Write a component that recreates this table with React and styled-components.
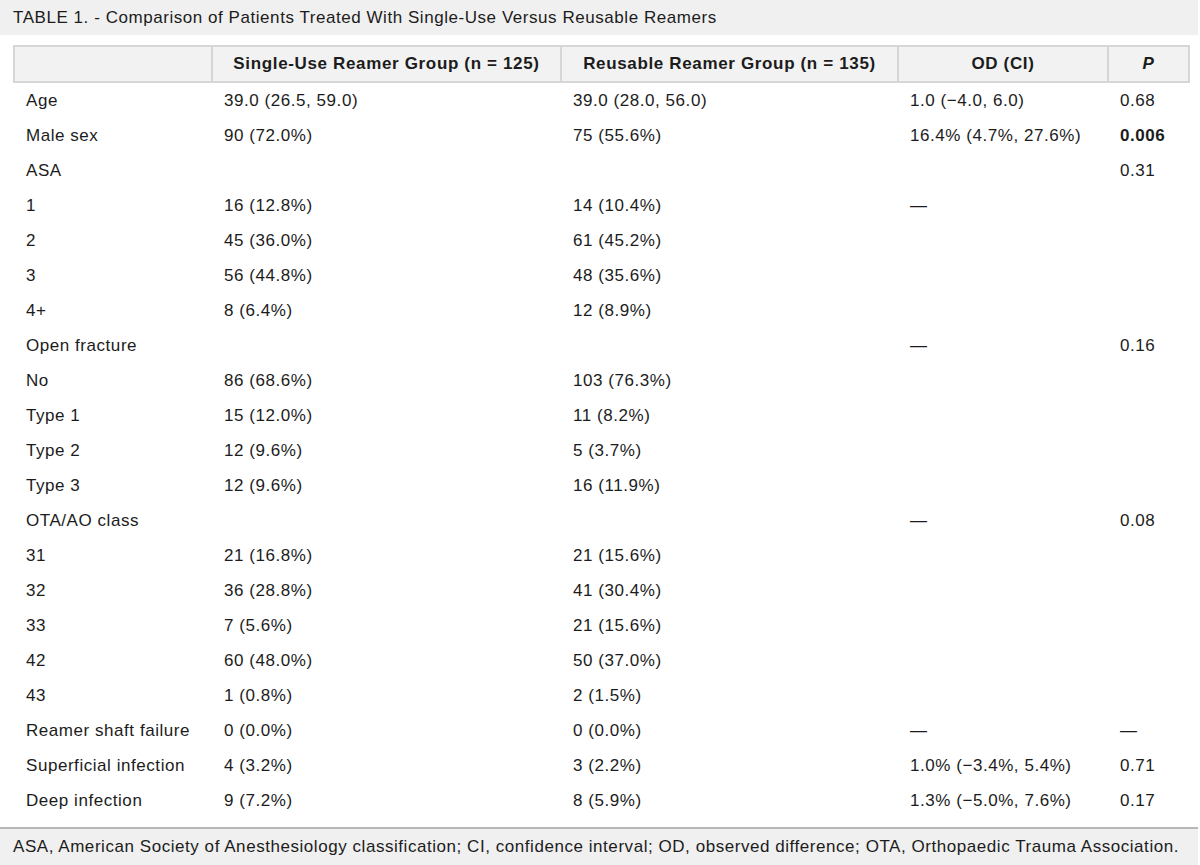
import styled, { createGlobalStyle } from 'styled-components'

const GlobalStyle = createGlobalStyle`
  body {
    margin: 0;
    background: #ffffff;
    font-family: "Liberation Sans", Arial, sans-serif;
    color: #1c1c1c;
  }
`

const rows = [
  { label: 'Age', single: '39.0 (26.5, 59.0)', reusable: '39.0 (28.0, 56.0)', od: '1.0 (−4.0, 6.0)', p: '0.68' },
  { label: 'Male sex', single: '90 (72.0%)', reusable: '75 (55.6%)', od: '16.4% (4.7%, 27.6%)', p: '0.006', strong: true },
  { label: 'ASA', single: '', reusable: '', od: '', p: '0.31' },
  { label: '1', single: '16 (12.8%)', reusable: '14 (10.4%)', od: '—', p: '' },
  { label: '2', single: '45 (36.0%)', reusable: '61 (45.2%)', od: '', p: '' },
  { label: '3', single: '56 (44.8%)', reusable: '48 (35.6%)', od: '', p: '' },
  { label: '4+', single: '8 (6.4%)', reusable: '12 (8.9%)', od: '', p: '' },
  { label: 'Open fracture', single: '', reusable: '', od: '—', p: '0.16' },
  { label: 'No', single: '86 (68.6%)', reusable: '103 (76.3%)', od: '', p: '' },
  { label: 'Type 1', single: '15 (12.0%)', reusable: '11 (8.2%)', od: '', p: '' },
  { label: 'Type 2', single: '12 (9.6%)', reusable: '5 (3.7%)', od: '', p: '' },
  { label: 'Type 3', single: '12 (9.6%)', reusable: '16 (11.9%)', od: '', p: '' },
  { label: 'OTA/AO class', single: '', reusable: '', od: '—', p: '0.08' },
  { label: '31', single: '21 (16.8%)', reusable: '21 (15.6%)', od: '', p: '' },
  { label: '32', single: '36 (28.8%)', reusable: '41 (30.4%)', od: '', p: '' },
  { label: '33', single: '7 (5.6%)', reusable: '21 (15.6%)', od: '', p: '' },
  { label: '42', single: '60 (48.0%)', reusable: '50 (37.0%)', od: '', p: '' },
  { label: '43', single: '1 (0.8%)', reusable: '2 (1.5%)', od: '', p: '' },
  { label: 'Reamer shaft failure', single: '0 (0.0%)', reusable: '0 (0.0%)', od: '—', p: '—' },
  { label: 'Superficial infection', single: '4 (3.2%)', reusable: '3 (2.2%)', od: '1.0% (−3.4%, 5.4%)', p: '0.71' },
  { label: 'Deep infection', single: '9 (7.2%)', reusable: '8 (5.9%)', od: '1.3% (−5.0%, 7.6%)', p: '0.17' },
]

export default function App() {
  return (
    <Page>
      <GlobalStyle />
      <Caption>TABLE 1. - Comparison of Patients Treated With Single-Use Versus Reusable Reamers</Caption>

      <Table>
        <colgroup>
          <col style={{ width: '198px' }} />
          <col style={{ width: '349px' }} />
          <col style={{ width: '337px' }} />
          <col style={{ width: '210px' }} />
          <col style={{ width: '81px' }} />
        </colgroup>
        <thead>
          <tr>
            <HeadCell />
            <HeadCell>Single-Use Reamer Group (n = 125)</HeadCell>
            <HeadCell>Reusable Reamer Group (n = 135)</HeadCell>
            <HeadCell>OD (CI)</HeadCell>
            <HeadCell><i>P</i></HeadCell>
          </tr>
        </thead>
        <tbody>
          {rows.map(r => (
            <tr key={r.label}>
              <Cell>{r.label}</Cell>
              <Cell>{r.single}</Cell>
              <Cell>{r.reusable}</Cell>
              <Cell>{r.od}</Cell>
              <Cell $bold={r.strong}>{r.p}</Cell>
            </tr>
          ))}
        </tbody>
      </Table>

      <Footnote>ASA, American Society of Anesthesiology classification; CI, confidence interval; OD, observed difference; OTA, Orthopaedic Trauma Association.</Footnote>
    </Page>
  )
}

const Page = styled.div`
  width: 1198px;
  font-size: 17px;
  letter-spacing: 0.55px;
`

const Caption = styled.div`
  background-color: #f0f0f0;
  height: 35px;
  line-height: 36px;
  padding-left: 13px;
`

const Table = styled.table`
  margin: 10px 0 0 13px;
  width: 1175px;
  table-layout: fixed;
  border-collapse: collapse;
`

const HeadCell = styled.th`
  height: 34px;
  padding: 0 12px;
  background-color: #f2f2f2;
  border: 2px solid #d6d6d6;
  font-weight: 700;
  text-align: center;
  letter-spacing: 0.65px;
  white-space: nowrap;
`

const Cell = styled.td`
  height: 35px;
  padding: 0 12px;
  font-weight: ${p => (p.$bold ? 700 : 400)};
  white-space: nowrap;
`

const Footnote = styled.div`
  margin-top: 9px;
  border-top: 2px solid #b8b8b8;
  background-color: #f0f0f0;
  height: 36px;
  line-height: 36px;
  padding-left: 13px;
`
